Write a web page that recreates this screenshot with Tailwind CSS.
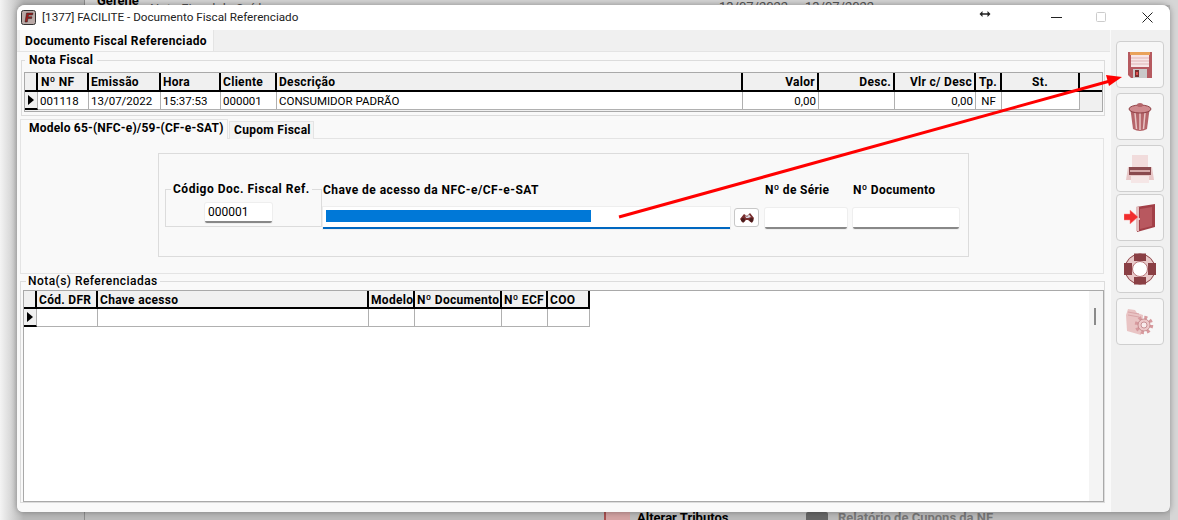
<!DOCTYPE html>
<html><head><meta charset="utf-8"><script src="https://cdn.jsdelivr.net/npm/@tailwindcss/browser@4"></script></head>
<body class="m-0">
<div class="relative w-[1178px] h-[520px] overflow-hidden bg-[#bababa] font-['Roboto',sans-serif] text-[12px] text-black">
  <!-- desktop behind -->
  <div class="absolute left-0 top-0 w-[84px] h-[520px] bg-gradient-to-r from-[#f4f4f4] to-[#b8b8b8] to-[28%]"></div>
  <div class="absolute left-[84px] top-0 w-[1094px] h-[5px] bg-[#d4d4d4]"></div>
  <div class="absolute left-[1170px] top-0 w-[8px] h-[520px] bg-[#d6d6d6]"></div>
  <div class="absolute left-[84px] top-0 w-[1px] h-[520px] bg-[#8c8c8c]"></div>
  <div class="absolute left-[97px] top-[-9px] font-bold text-[13px]">Gerene</div>
  <div class="absolute left-[150px] top-[-1px] text-[13px] text-[#555]">Nota Fiscal de Saída</div>
  <div class="absolute left-[719px] top-[-3px] text-[13px] text-[#555]">13/07/2022</div>
  <div class="absolute left-[805px] top-[-3px] text-[13px] text-[#555]">13/07/2022</div>
  <div class="absolute left-[604px] top-[512px] w-[26px] h-[8px] bg-[#d3a3a3] border-l-2 border-[#a85050]"></div>
  <div class="absolute left-[637px] top-[508px] font-bold text-[13px]">Alterar Tributos</div>
  <div class="absolute left-[806px] top-[512px] w-[22px] h-[8px] bg-[#666] rounded-t-[2px]"></div>
  <div class="absolute left-[838px] top-[508px] font-bold text-[13px] text-[#777]">Relatório de Cupons da NF</div>

  <!-- window -->
  <div class="absolute left-[17px] top-[5px] w-[1153px] h-[507px] rounded-t-lg rounded-b-md overflow-hidden flex flex-col bg-[#f0f0f0] shadow-[0_0_6px_rgba(0,0,0,0.35)]">
    <!-- title bar -->
    <div class="h-[25px] shrink-0 bg-white flex items-center pl-[4px]">
      <svg width="15" height="15" viewBox="0 0 15 15"><rect x=".5" y=".5" width="14" height="14" rx="2" fill="#b9a9a6" stroke="#333"/><path d="M4 12 L5.5 3 H12 L11.5 5 H7.5 L7.2 6.8 H11 L10.6 8.6 H6.9 L6.3 12Z" fill="#9b1c1c" stroke="#222" stroke-width=".5"/></svg>
      <span class="ml-[6px] text-[11.7px] text-[#222]">[1377] FACILITE - Documento Fiscal Referenciado</span>
      <div class="ml-auto flex items-center h-full">
        <svg width="12" height="8" viewBox="0 0 12 8" class="mr-[60px] -mt-[7px]"><path d="M2 4 H10" stroke="#222" stroke-width="1.5"/><path d="M3.5 1 L.5 4 L3.5 7Z M8.5 1 L11.5 4 L8.5 7Z" fill="#222"/></svg>
        <svg width="11" height="2" viewBox="0 0 11 2" class="mr-[34px]"><rect width="11" height="1" fill="#222"/></svg>
        <svg width="11" height="11" viewBox="0 0 11 11" class="mr-[35px]"><rect x=".5" y=".5" width="9" height="9" rx="1" fill="none" stroke="#ccc"/></svg>
        <svg width="11" height="11" viewBox="0 0 11 11" class="mr-[17px]"><path d="M.5 .5 L10.5 10.5 M10.5 .5 L.5 10.5" stroke="#222" stroke-width="1"/></svg>
      </div>
    </div>
    <div class="flex-1 flex min-h-0">
      <!-- main -->
      <div class="w-[1093px] shrink-0 flex flex-col">
        <div class="h-[21px] shrink-0 pl-[3px]"><div class="h-[21px] w-[194px] bg-[#f9f9f9] border-r border-[#e4e4e4] flex items-center pl-[5px] font-bold tracking-[0.37px]">Documento Fiscal Referenciado</div></div>
        <div class="flex-1 bg-[#f9f9f9] border-t border-[#e4e4e4] flex flex-col pl-[4px]">
          <!-- nota fiscal group -->
          <div class="relative mt-[8px] h-[56px] w-[1084px] shrink-0 border border-[#dcdcdc] pl-[2px] pt-[11px]">
            <span class="absolute left-[3px] top-[-8px] px-[4px] bg-[#f9f9f9] font-bold tracking-[0.35px] leading-[15px]">Nota Fiscal</span>
            <div class="w-[1079px] h-[40px] border border-[#a9a9a9] bg-[#f0f0f0] flex flex-col">
              <div class="flex h-[19px] shrink-0 font-bold tracking-[0.3px] border-b-2 border-black">
                <div class="w-[13px] border-r-2 border-black"></div>
                <div class="w-[51px] border-r-2 border-black pl-[3px] leading-[19px]">Nº NF</div>
                <div class="w-[72px] border-r-2 border-black pl-[2px] leading-[19px]">Emissão</div>
                <div class="w-[60px] border-r-2 border-black pl-[2px] leading-[19px]">Hora</div>
                <div class="w-[56px] border-r-2 border-black pl-[2px] leading-[19px]">Cliente</div>
                <div class="w-[466px] border-r-2 border-black pl-[2px] leading-[19px]">Descrição</div>
                <div class="w-[76px] border-r-2 border-black pr-[2px] text-right leading-[19px]">Valor</div>
                <div class="w-[76px] border-r-2 border-black pr-[2px] text-right leading-[19px]">Desc.</div>
                <div class="w-[81px] border-r-2 border-black pr-[2px] text-right leading-[19px]">Vlr c/ Desc</div>
                <div class="w-[26px] border-r-2 border-black text-center leading-[19px]">Tp.</div>
                <div class="w-[78px] border-r-2 border-black text-center leading-[19px]">St.</div>
              </div>
              <div class="flex h-[18px] leading-[19px] text-[11.5px]">
                <div class="w-[13px] border-r border-[#b0b0b0] bg-[#f0f0f0] flex items-center justify-center border-b-2 border-b-black"><svg width="6" height="10" viewBox="0 0 6 10"><path d="M0 0 L6 5 L0 10Z"/></svg></div>
                <div class="w-[51px] bg-white border-r border-b border-[#b0b0b0] pl-[2px]">001118</div>
                <div class="w-[72px] bg-white border-r border-b border-[#b0b0b0] pl-[2px]">13/07/2022</div>
                <div class="w-[60px] bg-white border-r border-b border-[#b0b0b0] pl-[2px]">15:37:53</div>
                <div class="w-[56px] bg-white border-r border-b border-[#b0b0b0] pl-[2px]">000001</div>
                <div class="w-[466px] bg-white border-r border-b border-[#b0b0b0] pl-[2px]">CONSUMIDOR PADRÃO</div>
                <div class="w-[76px] bg-white border-r border-b border-[#b0b0b0] pr-[2px] text-right">0,00</div>
                <div class="w-[76px] bg-white border-r border-b border-[#b0b0b0]"></div>
                <div class="w-[81px] bg-white border-r border-b border-[#b0b0b0] pr-[2px] text-right">0,00</div>
                <div class="w-[26px] bg-white border-r border-b border-[#b0b0b0] text-center">NF</div>
                <div class="w-[78px] bg-white border-r border-b border-[#b0b0b0]"></div>
              </div>
            </div>
          </div>
          <!-- second tabs -->
          <div class="flex items-end h-[20px] mt-[3px] shrink-0 relative z-10 -mb-[1px]">
            <div class="w-[208px] h-[20px] -ml-[1px] bg-[#f9f9f9] border border-b-0 border-[#e4e4e4] pl-[8px] font-bold tracking-[0.2px] leading-[17px] whitespace-nowrap">Modelo 65-(NFC-e)/59-(CF-e-SAT)</div>
            <div class="w-[85px] h-[18px] ml-[1px] bg-[#f4f4f4] border border-b-0 border-[#e4e4e4] pl-[4px] font-bold tracking-[0.3px] leading-[16px]">Cupom Fiscal</div>
          </div>
          <!-- tab panel -->
          <div class="h-[136px] w-[1084px] -ml-[1px] shrink-0 border border-[#e4e4e4] pt-[14px] pl-[137px]">
            <div class="w-[811px] h-[104px] border border-[#dcdcdc] flex items-start pt-[30px] pl-[6px]">
              <div class="relative w-[157px] h-[38px] mt-[5px] border border-[#dcdcdc] pt-[13px] pl-[39px]">
                <span class="absolute left-[5px] top-[-7px] px-[2px] bg-[#f9f9f9] font-bold tracking-[0.5px] leading-[13px] whitespace-nowrap">Código Doc. Fiscal Ref.</span>
                <div class="w-[67px] h-[20px] bg-white border-b-2 border-[#888] rounded-[2px] shadow-[0_0_0_1px_#eeeeee] pl-[3px] leading-[18px]">000001</div>
              </div>
              <div class="ml-[1px] w-[407px] flex flex-col">
                <div class="font-bold tracking-[0.45px] leading-[13px]">Chave de acesso da NFC-e/CF-e-SAT</div>
                <div class="mt-[10px] h-[22px] bg-white border-b-2 border-[#0067c0] pt-[3px] pl-[3px] shadow-[0_0_0_1px_#eeeeee]"><div class="w-[265px] h-[12px] bg-[#0078d7]"></div></div>
              </div>
              <div class="ml-[4px] mt-[24px] w-[25px] h-[19px] bg-white border border-[#c8c8c8] rounded-[3px] flex items-center justify-center">
                <svg width="16" height="12" viewBox="0 0 16 12"><path d="M1 7 L5 2 L8 4 L11 1 L15 6 L13 11 L9 8 L7 8 L4 11Z" fill="#7a2f2f"/><path d="M6 3 L8 5 L10 2.5 L12 5 L9 6 L7 6Z" fill="#d9d9e3"/><circle cx="4" cy="8" r="2" fill="#4a1c1c"/><circle cx="12.5" cy="8" r="2" fill="#4a1c1c"/></svg>
              </div>
              <div class="ml-[6px] w-[82px] flex flex-col">
                <div class="font-bold tracking-[0.3px] leading-[13px]">Nº de Série</div>
                <div class="mt-[11px] h-[21px] bg-white border-b-2 border-[#888] rounded-[2px] shadow-[0_0_0_1px_#eeeeee]"></div>
              </div>
              <div class="ml-[6px] w-[106px] flex flex-col">
                <div class="font-bold tracking-[0.3px] leading-[13px]">Nº Documento</div>
                <div class="mt-[11px] h-[21px] bg-white border-b-2 border-[#888] rounded-[2px] shadow-[0_0_0_1px_#eeeeee]"></div>
              </div>
            </div>
          </div>
          <!-- notas group -->
          <div class="relative mt-[7px] -ml-[1px] w-[1085px] h-[222px] shrink-0 border border-[#dcdcdc] pl-[2px] pt-[8px]">
            <span class="absolute left-[5px] top-[-8px] px-[2px] bg-[#f9f9f9] leading-[15px] font-medium tracking-[0.45px]">Nota(s) Referenciadas</span>
            <div class="w-[1081px] h-[212px] border border-[#a9a9a9] bg-white flex">
              <div class="w-[1065px] flex flex-col">
                <div class="flex h-[18px] shrink-0 font-bold tracking-[0.3px] w-[566px] bg-[#f0f0f0] border-b-2 border-black">
                  <div class="w-[13px] border-r-2 border-black"></div>
                  <div class="w-[61px] border-r-2 border-black pl-[2px] leading-[18px]">Cód. DFR</div>
                  <div class="w-[271px] border-r-2 border-black pl-[2px] leading-[18px]">Chave acesso</div>
                  <div class="w-[46px] border-r-2 border-black pl-[2px] leading-[18px]">Modelo</div>
                  <div class="w-[87px] border-r-2 border-black pl-[2px] leading-[18px]">Nº Documento</div>
                  <div class="w-[46px] border-r-2 border-black pl-[2px] leading-[18px]">Nº ECF</div>
                  <div class="w-[42px] border-r-2 border-black pl-[2px] leading-[18px]">COO</div>
                </div>
                <div class="flex h-[18px] shrink-0 w-[566px]">
                  <div class="w-[13px] bg-[#f0f0f0] flex items-center justify-center border-r border-b-2 border-r-[#b0b0b0] border-b-black"><svg width="6" height="10" viewBox="0 0 6 10"><path d="M0 0 L6 5 L0 10Z"/></svg></div>
                  <div class="w-[61px] border-r border-b border-[#b0b0b0]"></div>
                  <div class="w-[271px] border-r border-b border-[#b0b0b0]"></div>
                  <div class="w-[46px] border-r border-b border-[#b0b0b0]"></div>
                  <div class="w-[87px] border-r border-b border-[#b0b0b0]"></div>
                  <div class="w-[46px] border-r border-b border-[#b0b0b0]"></div>
                  <div class="w-[42px] border-r border-b border-[#b0b0b0]"></div>
                </div>
              </div>
              <div class="flex-1 bg-[#f4f4f4] pt-[17px] pl-[5px]"><div class="w-[2px] h-[17px] bg-[#8a8a8a]"></div></div>
            </div>
          </div>
        </div>
      </div>
      <!-- side toolbar -->
      <div class="flex-1 border-l border-[#fafafa] flex flex-col items-center pt-[11px] pr-[2px]">
        <div class="w-[48px] h-[47px] shrink-0 rounded-[4px] border border-[#cfcfcf] bg-[#f7f7f7] flex items-center justify-center">
          <svg width="26" height="28" viewBox="0 0 26 28"><path d="M1 1 H25 V27 H4 L1 24Z" fill="#b65a60"/><rect x="3" y="1" width="20" height="3" fill="#e9a35a"/><rect x="4" y="4" width="18" height="12" fill="#f7e6e6"/><path d="M4 7 H22 M4 10 H22 M4 13 H22" stroke="#e0b5b5"/><rect x="6" y="18" width="14" height="9" fill="#c9c9c9"/><rect x="8" y="19" width="4" height="7" fill="#7a3030"/><rect x="9" y="21" width="2" height="3" fill="#e05050"/></svg>
        </div>
        <div class="mt-[5px] w-[48px] h-[47px] shrink-0 rounded-[4px] border border-[#cfcfcf] bg-[#f7f7f7] flex items-center justify-center">
          <svg width="24" height="30" viewBox="0 0 24 30"><path d="M2.5 8 L5 27 Q12 31 19 27 L21.5 8Z" fill="#b5656a"/><path d="M7 11 L8.5 27 M12 11 V28 M17 11 L15.5 27" stroke="#e8c4c4" stroke-width="1.5"/><ellipse cx="12" cy="7" rx="11" ry="4" fill="#cf8a8e" stroke="#8f4045"/><ellipse cx="12" cy="3" rx="3" ry="2" fill="#b5656a"/></svg>
        </div>
        <div class="mt-[5px] w-[48px] h-[47px] shrink-0 rounded-[4px] border border-[#cfcfcf] bg-[#f7f7f7] flex items-center justify-center">
          <svg width="30" height="30" viewBox="0 0 30 30"><rect x="7" y="1" width="16" height="13" fill="#f1dcdc"/><path d="M3 13 H27 L29 26 H1Z" fill="#e8c8c8"/><rect x="4" y="13" width="22" height="8" fill="#8a4a4e"/><rect x="5" y="16" width="20" height="2" fill="#d5a9a9"/><rect x="6" y="22" width="18" height="7" fill="#f5e6e6"/></svg>
        </div>
        <div class="mt-[2px] w-[48px] h-[47px] shrink-0 rounded-[4px] border border-[#cfcfcf] bg-[#f7f7f7] flex items-center justify-center">
          <svg width="32" height="28" viewBox="0 0 32 28"><path d="M12 3 L31 0 V23 L13 28Z" fill="#a23f47"/><path d="M28 3 V22 L16 25 V5Z" fill="#b8585f"/><rect x="12" y="3" width="3" height="24" fill="#e3bcbc"/><circle cx="15" cy="15" r="1" fill="#f3dada"/><path d="M0 10 H6 V6 L14 13 L6 20 V16 H0Z" fill="#f02d2d" stroke="#ff8a8a" stroke-width=".5"/></svg>
        </div>
        <div class="mt-[5px] w-[48px] h-[47px] shrink-0 rounded-[4px] border border-[#cfcfcf] bg-[#f7f7f7] flex items-center justify-center">
          <svg width="32" height="33" viewBox="0 0 32 33"><circle cx="16" cy="16" r="11.5" fill="none" stroke="#e8c9c9" stroke-width="8"/><circle cx="16" cy="16" r="15" fill="none" stroke="#8f4a4e" stroke-width="1"/><circle cx="16" cy="16" r="7.5" fill="#fff" stroke="#b87478"/><path d="M10 0.5 H22 V8 H10Z M10 24 H22 V31.5 H10Z M0 10 H8 V22 H0Z M24 10 H32 V22 H24Z" fill="#8a3f44"/></svg>
        </div>
        <div class="mt-[5px] w-[48px] h-[47px] shrink-0 rounded-[4px] border border-[#cfcfcf] bg-[#f7f7f7] flex items-center justify-center">
          <svg width="30" height="30" viewBox="0 0 30 30"><path d="M1 8 L2 24 L16 28 L18 8 L12 6 L10 3 L3 2Z" fill="#e9c4c4"/><path d="M3 5 L14 7 M3 8 L14 10" stroke="#d9a5a8"/><circle cx="19" cy="18" r="7.5" fill="none" stroke="#d79a9e" stroke-width="3.5" stroke-dasharray="3 2.9"/><circle cx="19" cy="18" r="6" fill="#edc8c9" stroke="#b87478" stroke-width=".7"/><circle cx="19" cy="18" r="3" fill="#f8ecec" stroke="#b87478" stroke-width=".7"/></svg>
        </div>
      </div>
    </div>
  </div>

  <!-- red annotation arrow -->
  <svg class="absolute left-0 top-0 pointer-events-none" width="1178" height="520" viewBox="0 0 1178 520"><path d="M619 217 L1110 81" stroke="#ff0000" stroke-width="3" fill="none"/><path d="M1122 77 L1106 75 L1109 86Z" fill="#ff0000"/></svg>
</div>
</body></html>
